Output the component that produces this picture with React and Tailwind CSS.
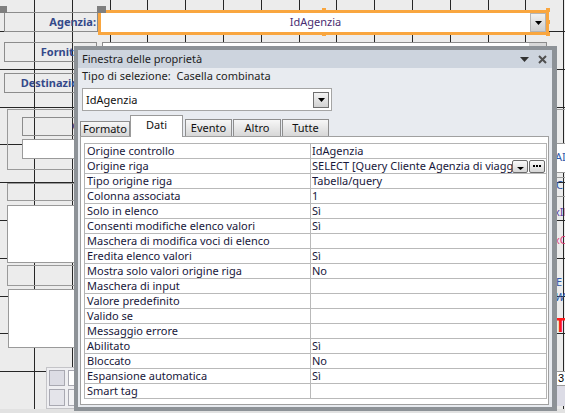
import React from "react";

const GX = Array.from({ length: 17 }, (_, k) => Math.round(34 + 37.8 * (k - 1)));
const GY = Array.from({ length: 13 }, (_, k) => Math.round(31 + 37.8 * (k - 1)));

function Grid() {
  return (
    <svg className="absolute inset-0" width="565" height="413" shapeRendering="crispEdges">
      {GX.map((x) => (
        <line key={"x" + x} x1={x + 0.5} y1={0} x2={x + 0.5} y2={413} stroke="#262626" strokeWidth="1" />
      ))}
      {GY.map((y) => (
        <line key={"y" + y} x1={0} y1={y + 0.5} x2={565} y2={y + 0.5} stroke="#262626" strokeWidth="1" />
      ))}
    </svg>
  );
}

function Tri({ w = 7, h = 4, color = "#000" }) {
  return (
    <svg width={w} height={h} viewBox={`0 0 ${w} ${h}`}>
      <polygon points={`0,0 ${w},0 ${w / 2},${h}`} fill={color} />
    </svg>
  );
}

const rows = [
  ["Origine controllo", "IdAgenzia"],
  ["Origine riga", "SELECT [Query Cliente Agenzia di viaggio].IdAgenzia, [Query Cliente Agenzia di viaggio].NomeAgenzia", true],
  ["Tipo origine riga", "Tabella/query"],
  ["Colonna associata", "1"],
  ["Solo in elenco", "Sì"],
  ["Consenti modifiche elenco valori", "Sì"],
  ["Maschera di modifica voci di elenco", ""],
  ["Eredita elenco valori", "Sì"],
  ["Mostra solo valori origine riga", "No"],
  ["Maschera di input", ""],
  ["Valore predefinito", ""],
  ["Valido se", ""],
  ["Messaggio errore", ""],
  ["Abilitato", "Sì"],
  ["Bloccato", "No"],
  ["Espansione automatica", "Sì"],
  ["Smart tag", ""],
];

function PropRow({ label, value, buttons }) {
  return (
    <div className="flex h-[15px] border-b border-[#b9b9b9] text-[#17173a]">
      <div className="w-[226px] shrink-0 border-r border-[#b9b9b9] pl-[2px] leading-[14px] whitespace-nowrap overflow-hidden">
        {label}
      </div>
      <div className="flex-1 min-w-0 flex items-center pl-[1px]">
        <div className="flex-1 min-w-0 leading-[14px] whitespace-nowrap overflow-hidden">{value}</div>
        {buttons && (
          <div className="flex gap-[1px] mr-[1px]">
            <div className="w-[16px] h-[13px] border border-[#6b6b6b] rounded-[2px] bg-gradient-to-b from-[#fbfbfb] to-[#d6d6d6] flex items-end justify-center pb-[2px]">
              <Tri w={7} h={3} />
            </div>
            <div className="w-[16px] h-[13px] border border-[#6b6b6b] rounded-[2px] bg-gradient-to-b from-[#fbfbfb] to-[#d6d6d6] flex items-center justify-center gap-[1px]">
              <span className="w-[2px] h-[2px] bg-black" />
              <span className="w-[2px] h-[2px] bg-black" />
              <span className="w-[2px] h-[2px] bg-black" />
            </div>
          </div>
        )}
      </div>
    </div>
  );
}

function Tab({ label, w, selected, ml, h = "h-[17px]" }) {
  if (selected) {
    return (
      <div
        className={`relative z-10 ${ml} ${w} h-[22px] -mb-[1px] border border-b-0 border-[#9a9a9a] bg-white flex justify-center pt-[2px] leading-[14px] text-[#111]`}
      >
        {label}
      </div>
    );
  }
  return (
    <div
      className={`${ml} ${w} ${h} border border-b-0 border-[#8e8e8e] bg-gradient-to-b from-[#f7f7f7] to-[#d7d7d7] flex items-center justify-center leading-[14px] text-[#111]`}
    >
      {label}
    </div>
  );
}

function CanvasLabel({ className, text, pr = "pr-[1px]" }) {
  return (
    <div
      className={`absolute border border-[#8c8c8c] flex items-center justify-end ${pr} font-bold text-[#34498a] whitespace-nowrap overflow-hidden ${className}`}
    >
      {text}
    </div>
  );
}

export default function App() {
  return (
    <div className="relative w-[565px] h-[413px] overflow-hidden bg-[#ececec] font-['Noto_Sans',sans-serif] text-[11px]">
      <Grid />

      {/* form designer canvas controls */}
      <CanvasLabel className="left-[4px] top-[12px] w-[94px] h-[20px]" text="Agenzia:" />
      <CanvasLabel className="left-[4px] top-[42px] w-[93px] h-[20px]" text="Fornitore:" />
      <div className="absolute left-[102px] top-[42px] w-[445px] h-[20px] border border-[#8c8c8c] bg-white flex justify-end">
        <div className="w-[17px] bg-[#d8d8d8]" />
      </div>
      <CanvasLabel className="left-[4px] top-[73px] w-[93px] h-[20px]" text="Destinazione:" />
      <div className="absolute left-[102px] top-[73px] w-[445px] h-[20px] border border-[#8c8c8c] bg-white" />

      <div className="absolute left-[7px] top-[109px] w-[600px] h-[61px] border border-[#9a9a9a]" />
      <CanvasLabel className="left-[22px] top-[117px] w-[120px] h-[19px]" text="Cliente:" pr="pr-[27px]" />
      <div className="absolute left-[22px] top-[139px] w-[120px] h-[20px] border border-[#9a9a9a] bg-white" />
      <div className="absolute left-[7px] top-[183px] w-[120px] h-[18px] border border-[#9a9a9a]" />
      <div className="absolute left-[7px] top-[205px] w-[120px] h-[58px] border border-[#9a9a9a] bg-white" />
      <div className="absolute left-[7px] top-[265px] w-[120px] h-[21px] border border-[#9a9a9a]" />
      <div className="absolute left-[8px] top-[289px] w-[120px] h-[59px] border border-[#9a9a9a] bg-white" />

      {/* bottom-left mini panel */}
      <div className="absolute left-[46px] top-[367px] w-[60px] h-[42px] border border-[#c4c4c8] bg-[#efeff2] grid grid-cols-[16px_16px] gap-[3px] p-[2px] pl-[2px]">
        <div className="h-[16px] border border-[#a9a9b2] bg-[#dcdce4]" />
        <div className="h-[16px] border border-[#a9a9b2] bg-white" />
        <div className="h-[17px] border border-[#a9a9b2] bg-[#e4e4ea]" />
        <div className="h-[17px] border border-[#a9a9b2] bg-[#f4f4f6] flex items-center justify-end pr-[1px]">
          <span className="w-[2px] h-[1px] bg-[#333]" />
        </div>
      </div>
      <div className="absolute left-0 top-[409px] w-[565px] h-[4px] bg-[#e2e2e2]" />

      {/* right edge fragments */}
      <div className="absolute left-[555px] top-[143px] w-[20px] h-[30px] border border-[#9a9a9a] bg-white" />
      <div className="absolute left-[555px] top-[150px] text-[#2f57a8] leading-[14px] whitespace-nowrap">AI</div>
      <div className="absolute left-[555px] top-[177px] w-[20px] h-[20px] border border-[#9a9a9a]" />
      <div className="absolute left-[556px] top-[178px] text-[#2f57a8] leading-[14px]">C</div>
      <div className="absolute left-[554px] top-[205px] text-[#5b3fa8] leading-[14px] whitespace-nowrap">xIN</div>
      <div className="absolute left-[554px] top-[233px] text-[#e0407a] leading-[14px] whitespace-nowrap">xC</div>
      <div className="absolute left-[556px] top-[275px] text-[#2f57a8] leading-[14px]">E</div>
      <div className="absolute left-[555px] top-[290px] text-[#2f57a8] italic leading-[14px]">W</div>
      <div className="absolute left-[555px] top-[315px] h-[18px] text-[#ff1a1a] font-bold text-[19px] leading-[20px]">T</div>
      <div className="absolute left-[556px] top-[371px] w-[20px] h-[15px] border border-[#9a9a9a] bg-white pl-[1px] leading-[13px] text-black font-['Liberation_Sans',sans-serif]">3</div>
      <div className="absolute left-[556px] top-[386px] w-[20px] h-[20px] bg-[#dcdce6]" />

      {/* selected combobox */}
      <div className="absolute left-[98px] top-[10px] w-[451px] h-[25px] border-[3px] border-[#f9a63f] bg-white flex">
        <div className="flex-1 flex items-center justify-center text-[#4a2d72]">IdAgenzia</div>
        <div className="w-[16px] mr-[0px] border border-[#b4b4b4] bg-gradient-to-b from-[#f0f0f0] to-[#cfcfcf] flex items-center justify-center">
          <Tri w={7} h={4} />
        </div>
      </div>
      <div className="absolute left-[322px] top-[8px] w-[4px] h-[4px] bg-[#f9a63f]" />
      <div className="absolute left-[322px] top-[33px] w-[4px] h-[3px] bg-[#f9a63f]" />
      <div className="absolute left-[546px] top-[8px] w-[4px] h-[4px] bg-[#f9a63f]" />
      <div className="absolute left-[546px] top-[20px] w-[4px] h-[4px] bg-[#f9a63f]" />
      <div className="absolute left-[546px] top-[32px] w-[4px] h-[4px] bg-[#f9a63f]" />
      <div className="absolute left-[0px] top-[6px] w-[7px] h-[7px] bg-[#7f7f7f]" />
      <div className="absolute left-[97px] top-[6px] w-[9px] h-[7px] bg-[#7f7f7f]" />

      {/* property sheet window */}
      <div className="absolute left-[74px] top-[46px] w-[483px] h-[365px] border-[4px] border-r-[5px] border-[#8d9297] bg-[#e8ebf0] flex flex-col">
        <div className="h-[18px] shrink-0 bg-[#cdd4de] flex items-center pl-[4px] pr-[5px] text-[#1e1e1e]">
          <span className="flex-1 leading-[18px] whitespace-nowrap">Finestra delle proprietà</span>
          <svg width="9" height="5" viewBox="0 0 9 5" className="mr-[9px]">
            <polygon points="0,0 9,0 4.5,5" fill="#333" />
          </svg>
          <svg width="9" height="9" viewBox="0 0 9 9">
            <path d="M1 1 L8 8 M8 1 L1 8" stroke="#505050" strokeWidth="2" />
          </svg>
        </div>
        <div className="flex-1 flex flex-col pl-[2px] pr-[3px] pb-[2px] min-h-0">
          <div className="ml-[2px] mt-[1px] h-[14px] leading-[14px] text-[#1e1e1e] whitespace-pre">Tipo di selezione:  Casella combinata</div>
          <div className="ml-[2px] mt-[5px] w-[250px] h-[23px] shrink-0 bg-white border border-[#a5a5a5] flex items-center">
            <span className="flex-1 pl-[3px] text-[#111] leading-[14px]">IdAgenzia</span>
            <div className="w-[16px] h-[16px] mr-[2px] border border-[#707070] bg-gradient-to-b from-[#f4f4f4] to-[#d2d2d2] flex items-center justify-center">
              <Tri w={7} h={4} />
            </div>
          </div>
          <div className="mt-[4px] h-[21px] shrink-0 flex items-end">
            <Tab label="Formato" w="w-[50px]" ml="ml-0" h="h-[15px]" />
            <Tab label="Dati" w="w-[53px]" ml="ml-0" selected />
            <Tab label="Evento" w="w-[47px]" ml="ml-[2px]" />
            <Tab label="Altro" w="w-[48px]" ml="ml-[1px]" />
            <Tab label="Tutte" w="w-[47px]" ml="ml-[1px]" />
          </div>
          <div className="flex-1 min-h-0 bg-white border border-[#a0a0a0] pt-[6px] pl-[3px] pr-[1px]">
            <div className="border-t border-l border-r border-[#b4b4b4]">
              {rows.map(([l, v, b]) => (
                <PropRow key={l} label={l} value={v} buttons={b} />
              ))}
            </div>
          </div>
        </div>
      </div>
    </div>
  );
}
